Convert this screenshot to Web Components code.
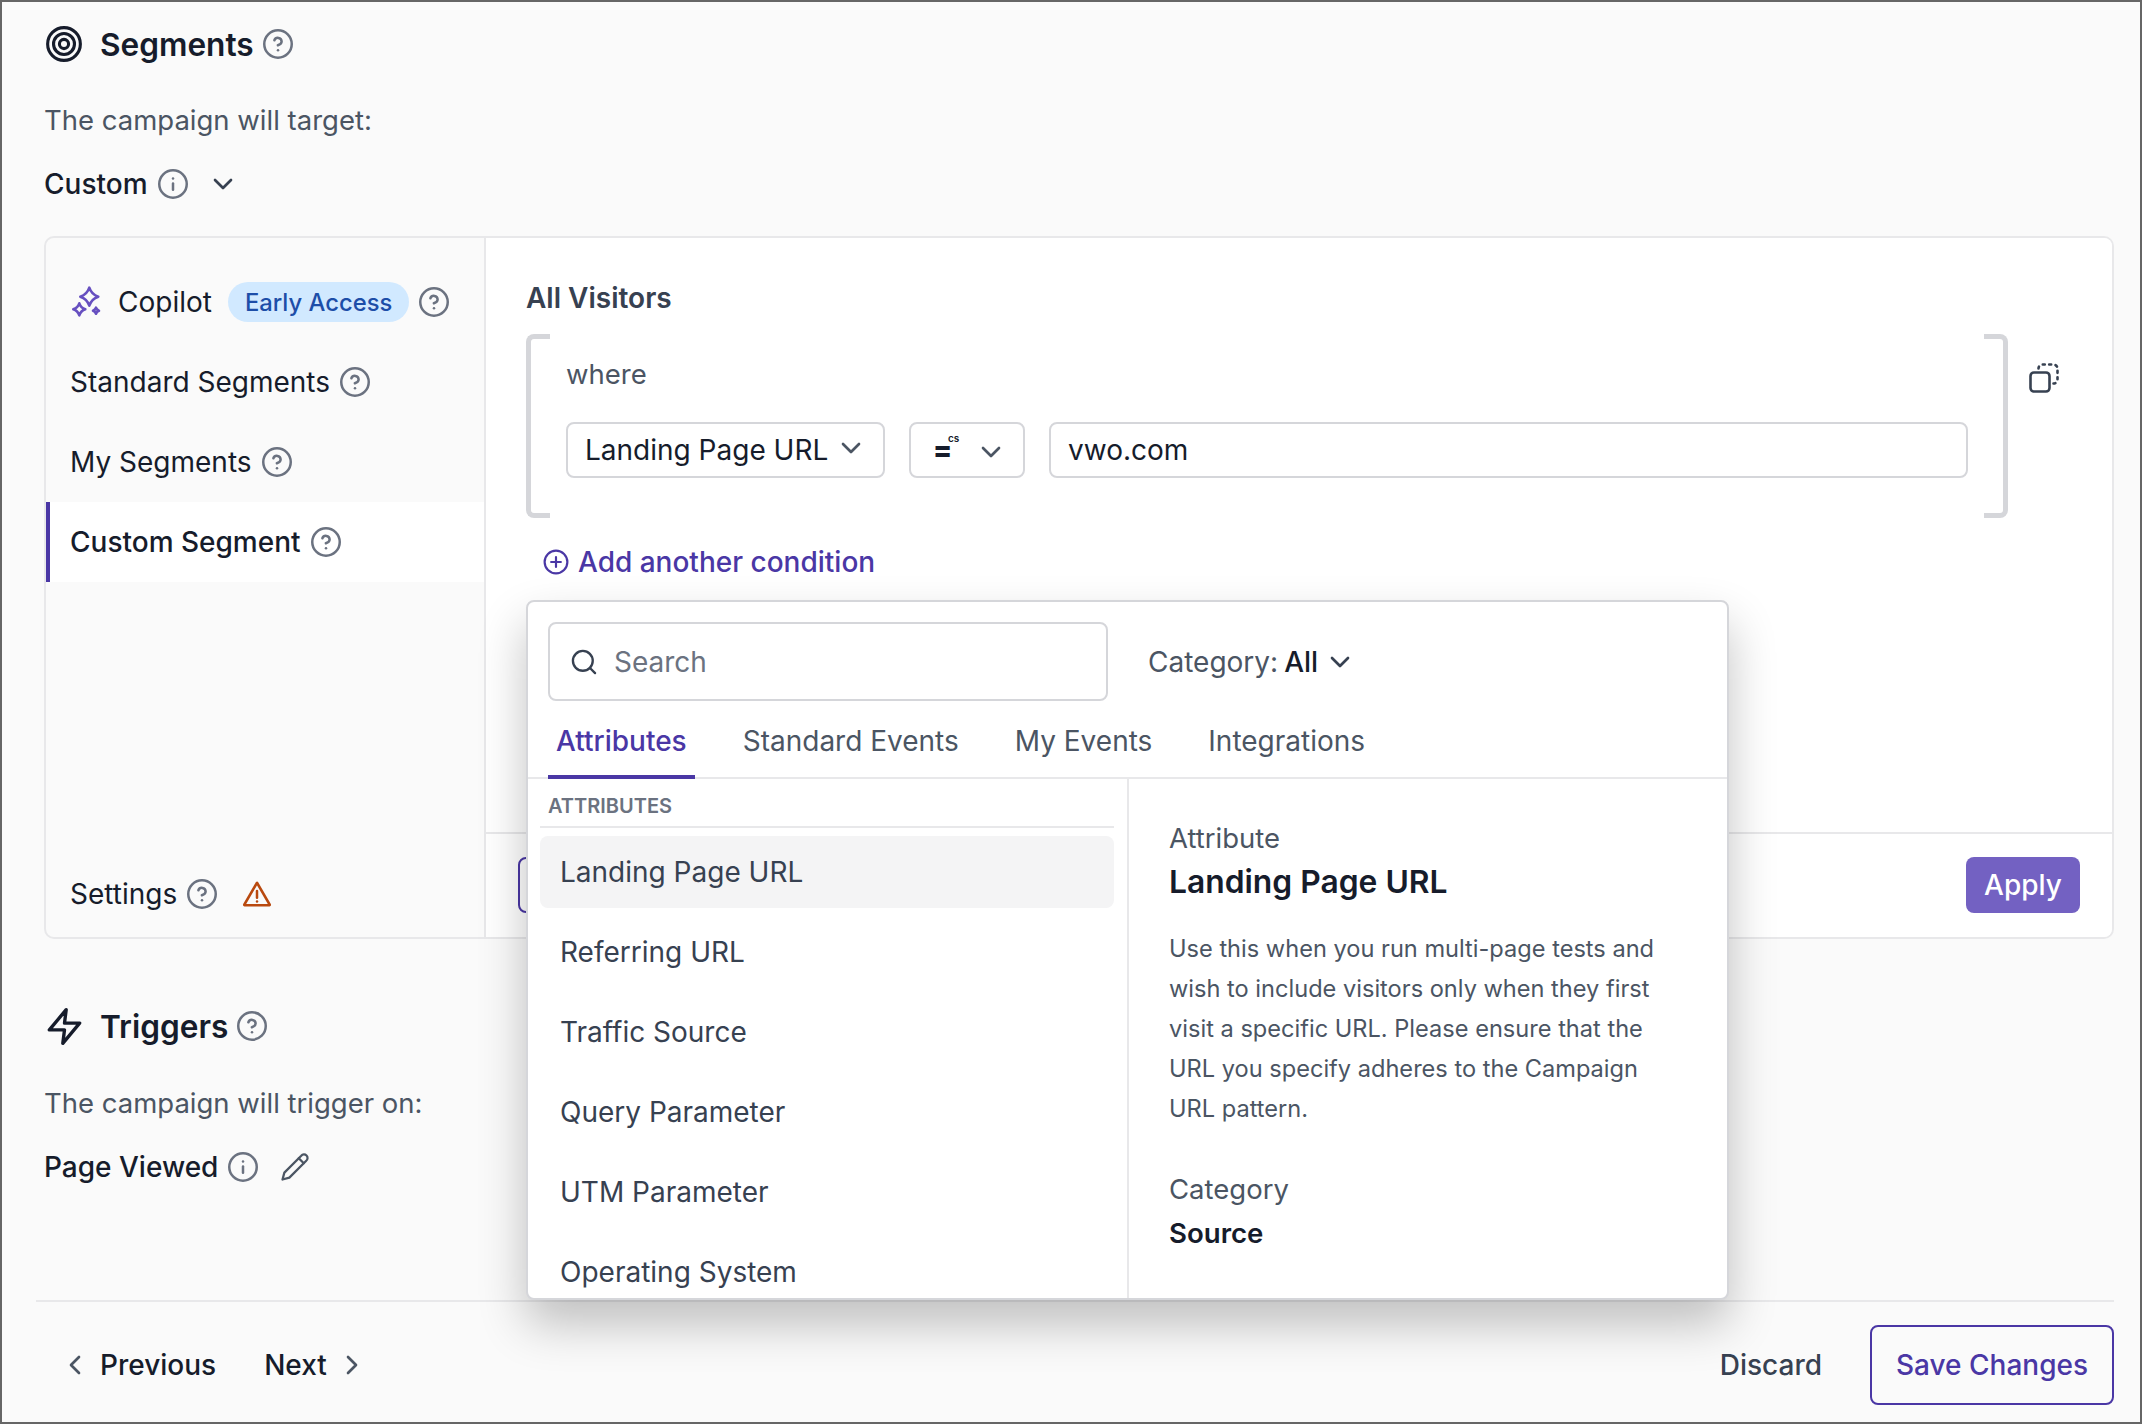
<!DOCTYPE html>
<html>
<head>
<meta charset="utf-8">
<title>Segments</title>
<style>
  html, body { margin: 0; padding: 0; background: #fafafa; }
  body { font-family: Inter, "Noto Sans", sans-serif; color: #161c2b; }
</style>
</head>
<body>
<segments-page></segments-page>
<script>
const ICONS = {
  help: '<circle cx="12" cy="12" r="11"/><path d="M9.1 9a3 3 0 0 1 5.8 1c0 2-3 3-3 3"/><path d="M12 17h.01"/>',
  info: '<circle cx="12" cy="12" r="11"/><path d="M12 16.5v-5"/><path d="M12 7.6h.01"/>',
  chevronDown: '<path d="M6 9l6 6 6-6"/>',
  chevronLeft: '<path d="M15 18l-6-6 6-6"/>',
  chevronRight: '<path d="M9 18l6-6-6-6"/>',
  target: '<circle cx="12" cy="12" r="10"/><circle cx="12" cy="12" r="6.4"/><circle cx="12" cy="12" r="2.8"/>',
  zap: '<path d="M13 2 3 14h9l-1 8 10-12h-9l1-8z"/>',
  plusCircle: '<circle cx="12" cy="12" r="10.5"/><path d="M12 7.5v9M7.5 12h9"/>',
  search: '<circle cx="11" cy="11" r="8.5"/><path d="M21.5 21.5l-4.4-4.4"/>',
  pencil: '<path d="M17 3a2.85 2.83 0 1 1 4 4L7.5 20.5 2 22l1.5-5.5Z"/><path d="m15 5 4 4"/>',
  warning: '<path d="M12 3 1.8 20.6a.3.3 0 0 0 .3.4h19.8a.3.3 0 0 0 .3-.4L12 3Z"/><path d="M12 9.5v5.5"/><path d="M12 18h.01"/>',
  sparkles: '<path d="M18.3 .7Q20.5 7.5 27.3 9.7Q20.5 11.9 18.3 18.7Q16.1 11.9 9.3 9.7Q16.1 7.5 18.3 .7Z"/><path d="M8.3 16.3Q9.8 20.8 14.3 22.3Q9.8 23.8 8.3 28.3Q6.8 23.8 2.3 22.3Q6.8 20.8 8.3 16.3Z"/><path d="M25 20.7Q25.8 22.9 28 23.7Q25.8 24.5 25 26.7Q24.2 24.5 22 23.7Q24.2 22.9 25 20.7Z"/>',
  copy: '<rect x="1.5" y="9.5" width="19" height="19" rx="3.5"/><path stroke-dasharray="2 4.4" d="M9.5 5.5A4 4 0 0 1 13.5 1.5H24.5A4 4 0 0 1 28.5 5.5V16.5A4 4 0 0 1 24.5 20.5"/>'
};

class UiIcon extends HTMLElement {
  connectedCallback() {
    const name = this.getAttribute('name');
    const size = this.getAttribute('size') || 30;
    const color = this.getAttribute('color') || '#6b7280';
    const stroke = this.getAttribute('stroke') || 2;
    const box = this.getAttribute('box') || '0 0 24 24';
    this.attachShadow({ mode: 'open' });
    this.shadowRoot.innerHTML = `
      <style>
        :host { display: inline-flex; flex: none; width: ${size}px; height: ${size}px; }
        svg { display: block; width: 100%; height: 100%; fill: none; stroke: ${color}; stroke-width: ${stroke}; stroke-linecap: round; stroke-linejoin: round; overflow: visible; }
      </style>
      <svg viewBox="${box}">${ICONS[name]}</svg>`;
  }
}
customElements.define('ui-icon', UiIcon);

class SectionHead extends HTMLElement {
  constructor() {
    super();
    this.attachShadow({ mode: 'open' });
    this.shadowRoot.innerHTML = `
      <style>
        :host { display: flex; align-items: center; height: 40px; font-size: 31.6px; font-weight: 600; color: #161c2b; }
        .icon { display: flex; width: 54px; padding-left: 2px; }
        .label { margin-right: 9px; }
      </style>
      <span class="icon"><slot name="icon"></slot></span>
      <span class="label"><slot></slot></span>
      <ui-icon name="help"></ui-icon>`;
  }
}
customElements.define('section-head', SectionHead);

class ChoiceLine extends HTMLElement {
  constructor() {
    super();
    this.attachShadow({ mode: 'open' });
    this.shadowRoot.innerHTML = `
      <style>
        :host { display: block; }
        .lead { height: 40px; line-height: 40px; font-size: 27.5px; color: #4b5563; }
        .value { display: flex; align-items: center; height: 40px; margin-top: 24px; font-size: 28px; font-weight: 500; color: #161c2b; }
        .name { margin-right: 10px; }
      </style>
      <div class="lead"><slot name="lead"></slot></div>
      <div class="value"><span class="name"><slot name="value"></slot></span><ui-icon name="info"></ui-icon><slot name="action"></slot></div>`;
  }
}
customElements.define('choice-line', ChoiceLine);

class NavItem extends HTMLElement {
  constructor() {
    super();
    this.attachShadow({ mode: 'open' });
    this.shadowRoot.innerHTML = `
      <style>
        :host { display: flex; align-items: center; gap: 10px; height: 80px; padding-left: 24px; font-size: 28px; color: #161c2b; box-sizing: border-box; }
        :host([active]) { padding-left: 20px; border-left: 4px solid #4a37a5; background: #fff; font-weight: 500; }
      </style>
      <slot name="before"></slot><span><slot></slot></span><slot name="badge"></slot><ui-icon name="help"></ui-icon><slot name="after"></slot>`;
  }
}
customElements.define('nav-item', NavItem);

class SelectBox extends HTMLElement {
  constructor() {
    super();
    this.attachShadow({ mode: 'open' });
    this.shadowRoot.innerHTML = `
      <style>
        :host { display: flex; align-items: center; flex: none; height: 56px; box-sizing: border-box; border: 2px solid #d5d6da; border-radius: 8px; background: #fff; font-size: 28px; color: #161c2b; }
      </style>
      <slot></slot>`;
  }
}
customElements.define('select-box', SelectBox);

class ConditionGroup extends HTMLElement {
  constructor() {
    super();
    this.attachShadow({ mode: 'open' });
    this.shadowRoot.innerHTML = `
      <style>
        :host { display: flex; height: 184px; }
        .bracket { flex: none; width: 24px; box-sizing: border-box; border: 5px solid #d5d6da; }
        .l { border-right: none; border-radius: 8px 0 0 8px; }
        .r { border-left: none; border-radius: 0 8px 8px 0; }
        .body { flex: 1; min-width: 0; padding: 20px 16px 0; }
        .where { height: 40px; line-height: 40px; font-size: 27.5px; color: #4b5563; }
        .row { display: flex; gap: 24px; margin-top: 28px; }
        .tools { flex: none; margin: 29px 0 0 21px; }
      </style>
      <div class="bracket l"></div>
      <div class="body">
        <div class="where"><slot name="where"></slot></div>
        <div class="row"><slot></slot></div>
      </div>
      <div class="bracket r"></div>
      <div class="tools"><ui-icon name="copy" size="30" color="#374151" stroke="2.6" box="0 0 30 30"></ui-icon></div>`;
  }
}
customElements.define('condition-group', ConditionGroup);

class ListItem extends HTMLElement {
  constructor() {
    super();
    this.attachShadow({ mode: 'open' });
    this.shadowRoot.innerHTML = `
      <style>
        :host { display: flex; align-items: center; flex: none; height: 72px; padding-left: 20px; border-radius: 8px; font-size: 28px; color: #374151; }
        :host([selected]) { background: #f4f4f5; }
      </style>
      <slot></slot>`;
  }
}
customElements.define('list-item', ListItem);

class TabItem extends HTMLElement {
  constructor() {
    super();
    this.attachShadow({ mode: 'open' });
    this.shadowRoot.innerHTML = `
      <style>
        :host { display: flex; align-items: center; height: 78px; padding: 6px 8px 0; box-sizing: border-box; font-size: 28px; color: #4b5563; border-bottom: 4px solid transparent; }
        :host([active]) { color: #4a37a5; font-weight: 500; border-bottom-color: #4a37a5; }
      </style>
      <slot></slot>`;
  }
}
customElements.define('tab-item', TabItem);

class AttrPopup extends HTMLElement {
  constructor() {
    super();
    this.attachShadow({ mode: 'open' });
    this.shadowRoot.innerHTML = `
      <style>
        :host { position: absolute; left: 40px; top: 362px; width: 1203px; height: 700px; box-sizing: border-box; display: flex; flex-direction: column; background: #fff; border: 2px solid #d5d6da; border-radius: 8px; box-shadow: 0 24px 48px rgba(0,0,0,.24); overflow: hidden; }
        .top { display: flex; align-items: center; flex: none; padding: 20px 0 0 20px; }
        .search { display: flex; align-items: center; gap: 16px; width: 560px; height: 79px; box-sizing: border-box; padding-left: 20px; border: 2px solid #d5d6da; border-radius: 8px; font-size: 28px; color: #6b7280; }
        .category { display: flex; align-items: center; margin-left: 40px; font-size: 28px; color: #4b5563; }
        .category b { font-weight: 500; color: #161c2b; margin-left: 6px; margin-right: 6px; }
        .tabs { display: flex; gap: 40px; flex: none; padding-left: 20px; border-bottom: 2px solid #e8e8ea; height: 76px; }
        .panes { display: flex; flex: 1; min-height: 0; }
        .list { flex: none; width: 574px; padding: 0 13px 0 12px; border-right: 2px solid #e8e8ea; overflow: hidden; }
        .label { height: 49px; padding-top: 8px; line-height: 38px; padding-left: 8px; box-sizing: border-box; border-bottom: 2px solid #e8e8ea; margin-bottom: 8px; font-size: 20px; font-weight: 600; color: #6b7280; }
        .items { display: flex; flex-direction: column; gap: 8px; }
        .detail { flex: 1; padding: 39px 40px 0; }
        .k { height: 40px; line-height: 40px; font-size: 27.5px; color: #4b5563; }
        .title { height: 44px; line-height: 44px; margin-top: 2px; font-size: 31.8px; font-weight: 600; color: #161c2b; }
        .desc { margin: 25px 0 40px; max-width: 525px; line-height: 40px; font-size: 23.6px; color: #4b5563; }
        .v { height: 40px; line-height: 40px; margin-top: 4px; font-size: 27.6px; font-weight: 600; color: #161c2b; }
      </style>
      <div class="top">
        <div class="search"><ui-icon name="search" size="28" color="#374151" stroke="2"></ui-icon><span>Search</span></div>
        <div class="category">Category: <b>All</b><ui-icon name="chevronDown" size="32" color="#374151" stroke="2"></ui-icon></div>
      </div>
      <div class="tabs">
        <tab-item active>Attributes</tab-item>
        <tab-item>Standard Events</tab-item>
        <tab-item>My Events</tab-item>
        <tab-item>Integrations</tab-item>
      </div>
      <div class="panes">
        <div class="list">
          <div class="label">ATTRIBUTES</div>
          <div class="items">
            <list-item selected>Landing Page URL</list-item>
            <list-item>Referring URL</list-item>
            <list-item>Traffic Source</list-item>
            <list-item>Query Parameter</list-item>
            <list-item>UTM Parameter</list-item>
            <list-item>Operating System</list-item>
          </div>
        </div>
        <div class="detail">
          <div class="k">Attribute</div>
          <div class="title">Landing Page URL</div>
          <div class="desc">Use this when you run multi-page tests and wish to include visitors only when they first visit a specific URL. Please ensure that the URL you specify adheres to the Campaign URL pattern.</div>
          <div class="k">Category</div>
          <div class="v">Source</div>
        </div>
      </div>`;
  }
}
customElements.define('attr-popup', AttrPopup);

class SegmentPanel extends HTMLElement {
  constructor() {
    super();
    this.attachShadow({ mode: 'open' });
    this.shadowRoot.innerHTML = `
      <style>
        :host { display: flex; height: 703px; margin-top: 32px; box-sizing: border-box; border: 2px solid #e8e8ea; border-radius: 10px; }
        .side { flex: none; width: 440px; display: flex; flex-direction: column; padding: 24px 0 3px; box-sizing: border-box; border-right: 2px solid #e8e8ea; }
        .side .grow { flex: 1; }
        .badge { display: inline-flex; align-items: center; height: 40px; padding: 0 17px; margin-left: 6px; border-radius: 20px; background: #d1e9ff; color: #1d4ea8; font-size: 23.8px; font-weight: 500; }
        .main { flex: 1; min-width: 0; display: flex; flex-direction: column; position: relative; background: #fff; border-radius: 0 8px 8px 0; }
        .content { flex: 1; padding: 40px 53px 0 40px; }
        .heading { height: 40px; line-height: 40px; font-size: 28px; font-weight: 600; color: #374151; margin-bottom: 16px; }
        .op { width: 116px; padding-left: 22px; box-sizing: border-box; }
        .eq { font-weight: 800; font-size: 28px; line-height: 14px; width: 14px; }
        sup { font-size: 10px; font-weight: 600; line-height: 10px; margin: -24px 11px 0 1px; width: 12px; }
        .url { flex: 1; min-width: 0; padding-left: 17px; }
        .add { display: flex; align-items: center; gap: 9px; height: 40px; margin: 24px 0 0 17px; font-size: 28px; font-weight: 500; color: #4a37a5; }
        .foot { flex: none; display: flex; justify-content: space-between; align-items: center; height: 105px; box-sizing: border-box; padding: 0 32px 1px 32px; border-top: 2px solid #e8e8ea; }
        .ghost { width: 120px; height: 56px; box-sizing: border-box; border: 2px solid #4a37a5; border-radius: 8px; }
        .apply { display: flex; align-items: center; justify-content: center; width: 114px; height: 56px; border-radius: 8px; background: #7361c2; color: #fff; font-size: 28px; font-weight: 500; }
      </style>
      <div class="side">
        <nav-item>
          <ui-icon slot="before" name="sparkles" size="30" color="#6750c0" stroke="2.6" box="0 0 30 30" style="margin:0 7px 0 1px"></ui-icon>
          Copilot
          <span slot="badge" class="badge">Early Access</span>
        </nav-item>
        <nav-item>Standard Segments</nav-item>
        <nav-item>My Segments</nav-item>
        <nav-item active>Custom Segment</nav-item>
        <div class="grow"></div>
        <nav-item>Settings
          <ui-icon slot="after" name="warning" size="30" color="#b9490f" stroke="2" style="margin-left:15px"></ui-icon>
        </nav-item>
      </div>
      <div class="main">
        <div class="content">
          <div class="heading">All Visitors</div>
          <condition-group>
            <span slot="where">where</span>
            <select-box style="width:319px;padding-left:17px;box-sizing:border-box">Landing Page URL<ui-icon name="chevronDown" size="32" color="#4b5563" stroke="2" style="margin:-4px 0 0 7px"></ui-icon></select-box>
            <select-box class="op"><span class="eq">=</span><sup>cs</sup><ui-icon name="chevronDown" size="32" color="#4b5563" stroke="2" style="margin:4px 0 0 4px"></ui-icon></select-box>
            <select-box class="url">vwo.com</select-box>
          </condition-group>
          <div class="add"><ui-icon name="plusCircle" size="26" color="#4a37a5" stroke="2"></ui-icon>Add another condition</div>
        </div>
        <div class="foot"><div class="ghost"></div><div class="apply">Apply</div></div>
        <attr-popup></attr-popup>
      </div>`;
  }
}
customElements.define('segment-panel', SegmentPanel);

class PageFooter extends HTMLElement {
  constructor() {
    super();
    this.attachShadow({ mode: 'open' });
    this.shadowRoot.innerHTML = `
      <style>
        :host { display: flex; align-items: center; flex: none; height: 122px; margin: auto 26px 0 34px; padding: 23px 0 17px 23px; box-sizing: border-box; border-top: 2px solid #e8e8ea; font-size: 28px; font-weight: 500; }
        .nav { display: flex; align-items: center; color: #161c2b; }
        .prev { gap: 9px; }
        .next { gap: 9px; margin-left: 48px; }
        .discard { margin-left: auto; color: #374151; }
        .save { display: flex; align-items: center; justify-content: center; width: 244px; height: 80px; box-sizing: border-box; margin-left: 48px; border: 2px solid #4a37a5; border-radius: 8px; color: #4a37a5; }
      </style>
      <div class="nav prev"><ui-icon name="chevronLeft" size="32" color="#4b5563"></ui-icon>Previous</div>
      <div class="nav next">Next<ui-icon name="chevronRight" size="32" color="#4b5563"></ui-icon></div>
      <div class="discard">Discard</div>
      <div class="save">Save Changes</div>`;
  }
}
customElements.define('page-footer', PageFooter);

class SegmentsPage extends HTMLElement {
  constructor() {
    super();
    this.attachShadow({ mode: 'open' });
    this.shadowRoot.innerHTML = `
      <style>
        :host { display: flex; flex-direction: column; width: 2142px; height: 1424px; box-sizing: border-box; border: 2px solid #666; background: #fafafa; overflow: hidden; }
        .block { padding: 22px 26px 0 42px; flex: none; }
        .lead { margin-top: 36px; }
        .chev { margin-left: 19px; }
        .triggers { margin-top: 67px; }
        .pen { margin-left: 22px; }
        .lead2 { margin-top: 37px; }
      </style>
      <div class="block">
        <section-head><ui-icon slot="icon" name="target" size="36" color="#161c2b" stroke="1.9" box="1 1 22 22"></ui-icon>Segments</section-head>
        <choice-line class="lead">
          <span slot="lead">The campaign will target:</span>
          <span slot="value">Custom</span>
          <ui-icon slot="action" class="chev" name="chevronDown" size="32" color="#374151" stroke="2"></ui-icon>
        </choice-line>
        <segment-panel></segment-panel>
        <section-head class="triggers"><ui-icon slot="icon" name="zap" size="37" color="#161c2b" stroke="2" box="1.5 1 21 22"></ui-icon>Triggers</section-head>
        <choice-line class="lead2">
          <span slot="lead">The campaign will trigger on:</span>
          <span slot="value">Page Viewed</span>
          <ui-icon slot="action" class="pen" name="pencil" size="30" color="#4b5563" stroke="1.8"></ui-icon>
        </choice-line>
      </div>
      <page-footer></page-footer>`;
  }
}
customElements.define('segments-page', SegmentsPage);
</script>
</body>
</html>
